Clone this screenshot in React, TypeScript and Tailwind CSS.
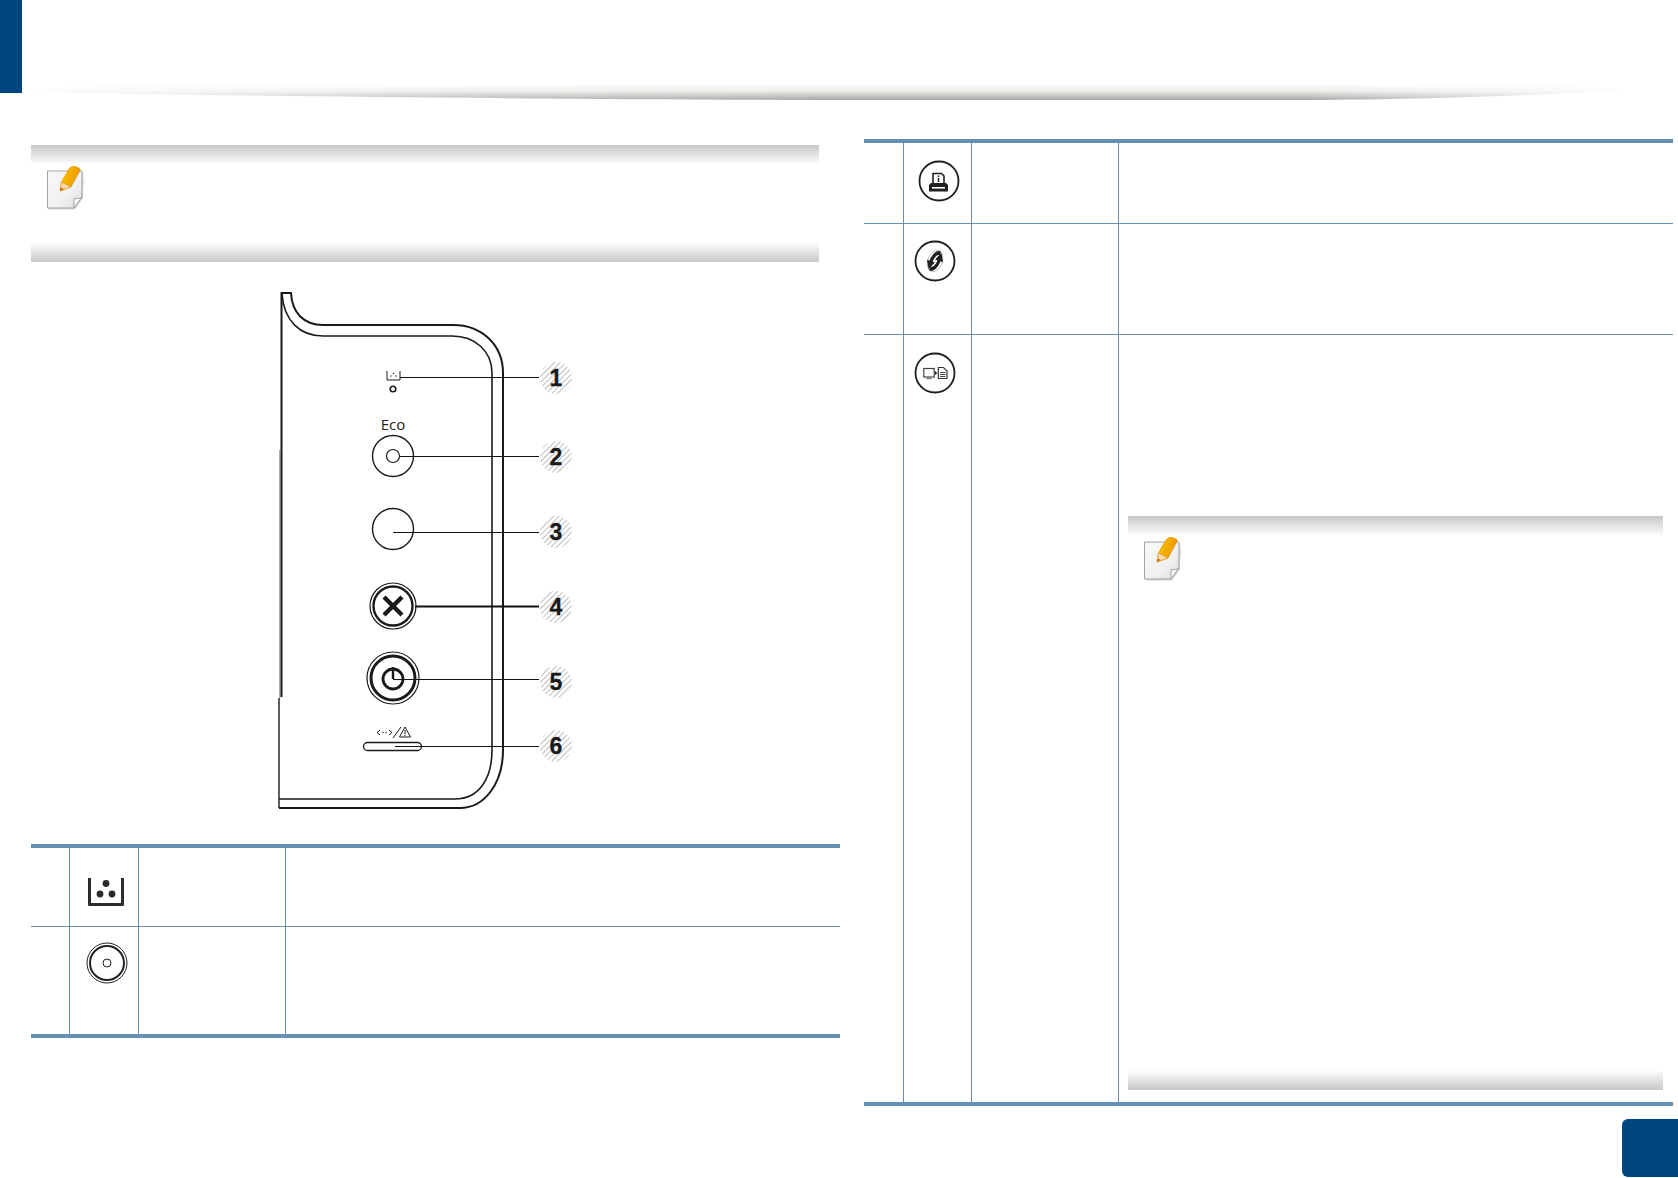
import React from 'react';

const NoteIcon = ({ id }: { id: string }) => (
    <svg width="42" height="46" viewBox="0 0 42 46" className="shrink-0">
        <defs>
            <linearGradient id={`${id}-paper`} x1="0" y1="0" x2="1" y2="1">
                <stop offset="0" stopColor="#f8f8f8" />
                <stop offset="0.6" stopColor="#f1f1f1" />
                <stop offset="1" stopColor="#dcdcdc" />
            </linearGradient>
            <linearGradient id={`${id}-pencil`} x1="0" y1="0" x2="1" y2="0.3">
                <stop offset="0" stopColor="#f9cc00" />
                <stop offset="1" stopColor="#f09400" />
            </linearGradient>
        </defs>
        <path d="M33 8 C38 10 40 15 38 20 L34 26 Z" fill="#ececec" />
        <path d="M2.500 7 H37 V33 L29 44.500 H2.500 Z" fill="#d4d4d4" />
        <path d="M1.500 6 H36 V32 L28 43 H1.500 Z" fill={`url(#${id}-paper)`} stroke="#a3a3a3" strokeWidth="1" />
        <path d="M36 32 L28 43 V33.500 C31 34 33.500 33.500 36 32 Z" fill="#fbfbfb" stroke="#a3a3a3" strokeWidth="1" />
        <path d="M14 26 L15.500 17 L23.500 3 C26 0.500 32 1 34.500 4.500 L25 22 Z" fill={`url(#${id}-pencil)`} stroke="#e08a00" strokeWidth="0.6" />
        <path d="M14 26 L15.500 17 L25 22 Z" fill="#f8d9b0" stroke="#e08a00" strokeWidth="0.5" />
        <path d="M14 26 L14.600 22.500 L18 24 Z" fill="#c8700c" />
    </svg>
);

const NoteBox = ({ id, className }: { id: string; className: string }) => (
    <div className={`flex flex-col ${className}`}>
        <div className="h-[20px] shrink-0 bg-gradient-to-b from-[#c8c8c8] to-white" />
        <div className="flex-1 pl-[15px]">
            <NoteIcon id={id} />
        </div>
        <div className="h-[20px] shrink-0 bg-gradient-to-b from-white to-[#c8c8c8]" />
    </div>
);

const Callout = ({ n, y, lineY, x1, heavy }: { n: number; y: number; lineY: number; x1: number; heavy?: boolean }) => (
    <g>
        <circle cx="556" cy={y} r="16" fill="url(#hatch)" />
        <line x1={x1} y1={lineY + 0.5} x2="539" y2={lineY + 0.5} stroke="#111" strokeWidth={heavy ? 2 : 1} />
        <text x="556" y={y + 8} textAnchor="middle" fontFamily="'Liberation Sans', sans-serif" fontWeight="700" fontSize="23" fill="#1a1a1a" stroke="#1a1a1a" strokeWidth="0.3">
            {n}
        </text>
    </g>
);

// control panel drawing, coordinates are page pixels
const PanelDiagram = () => (
    <svg width="809" height="582" viewBox="31 262 809 582" className="block">
        <defs>
            <pattern id="hatch" width="4" height="4" patternUnits="userSpaceOnUse" patternTransform="rotate(45)">
                <rect width="4" height="4" fill="white" />
                <rect width="1" height="4" fill="#bdbdbd" />
            </pattern>
        </defs>
        <g fill="none" stroke="#1a1a1a" strokeWidth="1.6">
            <path d="M281.500 697 V293 H291 C292 313 304 325 323 325 H453 C482 325 503 345 503 373 V750 C503 784 484 808 460 808 H279" strokeWidth="2" />
            <path d="M279 808 V698" strokeWidth="1.400" />
            <path d="M279.800 698 V450" strokeWidth="0.500" />
            <path d="M282 294 C284 321 300 336 323 336 H452 C475 336 492 351 492 373 V750 C492 780 478 799 455 799 H279" />
            <path d="M387 371 V380 H400 V371" strokeWidth="1" />
            <circle cx="393" cy="389" r="2.800" />
            <circle cx="393" cy="456" r="20.500" strokeWidth="1.400" />
            <circle cx="393" cy="456" r="6.500" strokeWidth="1.200" />
            <circle cx="393" cy="529" r="20.500" strokeWidth="1.400" />
            <circle cx="393" cy="606" r="23" strokeWidth="1.200" />
            <circle cx="393" cy="606" r="19.500" strokeWidth="2.400" />
            <path d="M384 597 L402 615 M402 597 L384 615" strokeWidth="4.400" />
            <circle cx="393" cy="678" r="26" strokeWidth="1.200" />
            <circle cx="393" cy="678" r="22" strokeWidth="3" />
            <circle cx="393" cy="679" r="10" strokeWidth="2.800" />
            <path d="M393 667 V679" strokeWidth="2.400" />
            <rect x="363.500" y="742.500" width="58" height="8" rx="4" strokeWidth="1.300" />
            <path d="M380 730 L377 732.500 L380 735 M389 730 L392 732.500 L389 735 M393 738 L401 727" strokeWidth="1" />
            <path d="M405 727 L410.500 737 H399.500 Z" strokeWidth="1" />
        </g>
        <g fill="#1a1a1a">
            <circle cx="391" cy="376" r="0.700" />
            <circle cx="396" cy="376" r="0.700" />
            <circle cx="393.500" cy="373.500" r="0.700" />
            <circle cx="383" cy="732.500" r="0.700" />
            <circle cx="386" cy="732.500" r="0.700" />
            <rect x="404.500" y="730" width="1" height="4" />
            <rect x="404.500" y="735" width="1" height="1" />
        </g>
        <text x="393" y="430" textAnchor="middle" fontFamily="'Open Sans', sans-serif" fontSize="15" fill="#222">
            Eco
        </text>
        <Callout n={1} y={378} lineY={377} x1={400} />
        <Callout n={2} y={457} lineY={456} x1={400} />
        <Callout n={3} y={532} lineY={532} x1={393} />
        <Callout n={4} y={607} lineY={606} x1={415} heavy />
        <Callout n={5} y={682} lineY={679} x1={393} />
        <Callout n={6} y={746} lineY={746} x1={395} />
    </svg>
);

const TonerIcon = () => (
    <svg width="38" height="30" viewBox="0 0 38 30">
        <path d="M2.500 1 V27.500 H35.500 V1" fill="none" stroke="#2b2b2b" strokeWidth="3" strokeLinejoin="round" />
        <circle cx="19" cy="6.500" r="3.400" fill="#2b2b2b" />
        <circle cx="13" cy="17" r="3.400" fill="#2b2b2b" />
        <circle cx="25" cy="17" r="3.400" fill="#2b2b2b" />
    </svg>
);

const EcoIcon = () => (
    <svg width="42" height="42" viewBox="0 0 42 42">
        <g fill="none" stroke="#222">
            <circle cx="21" cy="21" r="20" strokeWidth="1" />
            <circle cx="21" cy="21" r="17" strokeWidth="2" />
            <circle cx="21" cy="21" r="4" strokeWidth="1" />
        </g>
    </svg>
);

const Ring = ({ children }: { children: React.ReactNode }) => (
    <svg width="42" height="42" viewBox="0 0 42 42">
        <circle cx="21" cy="21" r="19.500" fill="none" stroke="#1f1f1f" strokeWidth="1.800" />
        {children}
    </svg>
);

const PrinterIcon = () => (
    <Ring>
        <path d="M15 23 V13.500 H23.500 L26 16 V23" fill="none" stroke="#1f1f1f" strokeWidth="1.600" />
        <rect x="19.800" y="15.500" width="1.500" height="1.500" fill="#1f1f1f" />
        <rect x="19.800" y="18" width="1.500" height="4" fill="#1f1f1f" />
        <path d="M13 23 H28 L30 25 V31.500 H11 V25 Z" fill="#1f1f1f" />
        <rect x="14" y="27" width="13" height="1.600" fill="white" />
    </Ring>
);

const RefreshIcon = () => (
    <Ring>
        <g transform="translate(21 21) rotate(20) scale(0.8 1) translate(-21 -21)">
            <ellipse cx="21" cy="21" rx="9" ry="11" fill="none" stroke="#777" strokeWidth="0.500" />
            <path d="M24 12 C19 12 16 17 16.500 24" fill="none" stroke="#1f1f1f" strokeWidth="4" />
            <path d="M11 22.500 L21.500 22.500 L17 31 Z" fill="#1f1f1f" />
            <path d="M18 30 C23 30 26 25 25.500 18" fill="none" stroke="#1f1f1f" strokeWidth="4" />
            <path d="M20.500 19.500 L31 19.500 L25 11 Z" fill="#1f1f1f" />
        </g>
    </Ring>
);

const CopyIcon = () => (
    <Ring>
        <rect x="9.800" y="16.500" width="10.400" height="8.500" fill="none" stroke="#444" strokeWidth="1.200" />
        <path d="M12.500 26.500 H17.500" stroke="#777" strokeWidth="1.400" />
        <path d="M21 19 L23.300 21 L21 23 Z" fill="#1f1f1f" />
        <path d="M24.300 15.500 H29.500 L33 19 V26.500 H24.300 Z" fill="none" stroke="#333" strokeWidth="1.200" />
        <path d="M26 20.500 H31.500 M26 22.500 H31.500 M26 24.500 H31.500" stroke="#333" strokeWidth="0.900" />
    </Ring>
);

const Row = ({ icon, last, className, children, pad, numCol, iconCol }: any) => (
    <div className={`flex ${last ? '' : 'border-b border-[#6490b5]'} ${className}`}>
        <div className={`${numCol} shrink-0 border-r border-[#6490b5]`} />
        <div className={`${iconCol} shrink-0 border-r border-[#6490b5] ${pad}`}>{icon}</div>
        <div className="w-[147px] shrink-0 border-r border-[#6490b5]" />
        <div className="flex-1 min-w-0 flex">{children}</div>
    </div>
);

const App = () => {
    return (
        <div className="relative w-[1678px] h-[1178px] bg-white overflow-hidden font-['Liberation_Sans',sans-serif]">
            <header className="flex h-[100px]">
                <div className="w-[22px] h-[93px] bg-[#004480]" />
                <svg width="1600" height="18" viewBox="0 0 1600 18" className="mt-[83px] ml-[8px]">
                    <defs>
                        <linearGradient id="rule" x1="0" y1="0" x2="0" y2="1">
                            <stop offset="0" stopColor="#ffffff" />
                            <stop offset="0.45" stopColor="#ecebe9" />
                            <stop offset="1" stopColor="#aaa6a3" />
                        </linearGradient>
                        <linearGradient id="fade" x1="0" y1="0" x2="1" y2="0">
                            <stop offset="0" stopColor="#ffffff" stopOpacity="0.85" />
                            <stop offset="0.25" stopColor="#ffffff" stopOpacity="0.2" />
                            <stop offset="0.5" stopColor="#ffffff" stopOpacity="0" />
                            <stop offset="0.8" stopColor="#ffffff" stopOpacity="0" />
                            <stop offset="1" stopColor="#ffffff" stopOpacity="0.85" />
                        </linearGradient>
                    </defs>
                    <path d="M2 9 C20 4 60 1 120 1 L1480 1 C1540 2 1580 4 1592 7 C1480 14 1350 17 1250 17 L800 17 C500 16 200 13 2 9 Z" fill="url(#rule)" />
                    <rect width="1600" height="18" fill="url(#fade)" />
                </svg>
            </header>

            <main className="flex pl-[31px] gap-[24px]">
                <section className="w-[809px] shrink-0 pt-[45px]">
                    <NoteBox id="top" className="w-[788px] h-[117px]" />
                    <PanelDiagram />
                    <div className="border-y-4 border-[#6490b5]">
                        <Row numCol="w-[39px]" iconCol="w-[69px]" className="h-[79px]" pad="pt-[29px] pl-[17px]" icon={<TonerIcon />} />
                        <Row numCol="w-[39px]" iconCol="w-[69px]" last className="h-[107px]" pad="pt-[15px] pl-[16px]" icon={<EcoIcon />} />
                    </div>
                </section>

                <section className="w-[809px] shrink-0 pt-[39px]">
                    <div className="border-y-4 border-[#6490b5]">
                        <Row numCol="w-[40px]" iconCol="w-[68px]" className="h-[81px]" pad="pt-[17px] pl-[14px]" icon={<PrinterIcon />} />
                        <Row numCol="w-[40px]" iconCol="w-[68px]" className="h-[111px]" pad="pt-[16px] pl-[10px]" icon={<RefreshIcon />} />
                        <Row numCol="w-[40px]" iconCol="w-[68px]" last className="h-[767px]" pad="pt-[17px] pl-[10px]" icon={<CopyIcon />}>
                            <div className="flex-1 pl-[9px] pr-[10px] pt-[181px] pb-[12px]">
                                <NoteBox id="inner" className="h-[574px]" />
                            </div>
                        </Row>
                    </div>
                </section>
            </main>

            <div className="absolute right-0 bottom-px w-[56px] h-[58px] bg-[#004480] rounded-l-[6px]" />
        </div>
    );
};

export default App;
